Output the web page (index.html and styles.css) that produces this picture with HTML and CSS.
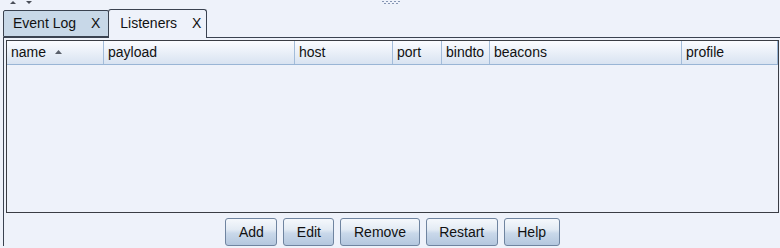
FILE: index.html
```html
<!DOCTYPE html>
<html lang="en">
<head>
    <meta charset="UTF-8">
    <title>Listeners</title>
    <link rel="stylesheet" href="styles.css">
</head>
<body>

    <!-- Split pane handle -->
    <div class="topbar">
        <div class="arrows">
            <svg width="24" height="6" viewBox="0 0 24 6">
                <polygon points="2,4 8,4 5,1" fill="#4a4f58"/>
                <polygon points="18,1 24,1 21,4" fill="#4a4f58"/>
            </svg>
        </div>
        <div class="grip">
            <svg width="20" height="6" viewBox="0 0 20 6">
                <g fill="#8797b4">
                    <rect x="0" y="1" width="2" height="1"/>
                    <rect x="4" y="1" width="2" height="1"/>
                    <rect x="8" y="1" width="2" height="1"/>
                    <rect x="12" y="1" width="2" height="1"/>
                    <rect x="16" y="1" width="2" height="1"/>
                    <rect x="2" y="3" width="2" height="1"/>
                    <rect x="6" y="3" width="2" height="1"/>
                    <rect x="10" y="3" width="2" height="1"/>
                    <rect x="14" y="3" width="2" height="1"/>
                </g>
            </svg>
        </div>
        <div></div>
    </div>

    <!-- Tabs -->
    <div class="tabs">
        <div class="tab">Event Log <span class="close">X</span></div>
        <div class="tab active">Listeners <span class="close">X</span></div>
    </div>

    <div class="panel">
        <!-- Listener table -->
        <div class="table">
            <div class="thead">
                <div class="th">name <svg class="sort" width="7" height="4" viewBox="0 0 7 4"><polygon points="0,4 7,4 3.5,0" fill="#5a606b"/></svg></div>
                <div class="th">payload</div>
                <div class="th">host</div>
                <div class="th">port</div>
                <div class="th">bindto</div>
                <div class="th">beacons</div>
                <div class="th">profile</div>
            </div>
            <div class="tbody"></div>
        </div>

        <!-- Buttons -->
        <div class="buttons">
            <button class="btn">Add</button>
            <button class="btn">Edit</button>
            <button class="btn">Remove</button>
            <button class="btn">Restart</button>
            <button class="btn">Help</button>
        </div>
    </div>

</body>
</html>
```

FILE: styles.css
```css
/* General */
body {
    margin: 0;
    height: 248px;
    overflow: hidden;
    background-color: #eef2fa;
    font-family: 'Liberation Sans', Arial, sans-serif;
    font-size: 14px;
    color: #111;
}

/* Split pane handle */
.topbar {
    display: grid;
    grid-template-columns: 1fr auto 1fr;
    height: 9px;
}

.arrows {
    padding-left: 8px;
}

.arrows svg,
.grip svg {
    display: block;
}

.grip {
    margin-left: 4px;
}

/* Tabs */
.tabs {
    display: flex;
    align-items: flex-end;
    margin-left: 3px;
    height: 28px;
}

.tab {
    box-sizing: border-box;
    height: 27px;
    padding: 0 8px 0 9px;
    line-height: 25px;
    background-color: #c8d8e8;
    border: 1px solid #3a4250;
    border-radius: 2px 2px 0 0;
}

.tab .close {
    margin-left: 11px;
}

.tab.active {
    position: relative;
    height: 29px;
    margin-bottom: -1px;
    margin-left: -1px;
    padding: 0 5px 0 11px;
    line-height: 27px;
    background-color: #eef2fa;
    border-bottom: none;
    border-radius: 3px 3px 0 0;
}

/* Panel */
.panel {
    margin-left: 3px;
    width: 790px;
    border-top: 1px solid #3a4250;
    border-left: 1px solid #3a4250;
    padding: 2px 0 0 2px;
}

.table {
    box-sizing: border-box;
    width: 773px;
    height: 173px;
    border: 1px solid #3a3d44;
    background-color: #eef2fa;
}

.thead {
    display: grid;
    grid-template-columns: 96px 191px 98px 49px 48px 192px 96px;
    width: 771px;
    height: 24px;
    box-sizing: border-box;
    border-bottom: 1px solid #99b5d5;
    border-right: 1px solid #99b5d5;
    background: linear-gradient(#fbfcff, #d8e3f1);
}

.th {
    padding-left: 4px;
    line-height: 23px;
    border-left: 1px solid #a3bcd9;
    white-space: nowrap;
}

.th:first-child {
    border-left: none;
}

.sort {
    margin-left: 5px;
    vertical-align: 3px;
}

/* Buttons */
.buttons {
    display: flex;
    justify-content: center;
    gap: 6px;
    width: 773px;
    margin-top: 5px;
}

.btn {
    height: 28px;
    padding: 0 12.5px;
    font-family: 'Liberation Sans', Arial, sans-serif;
    font-size: 14px;
    color: #111;
    border: 1px solid #6f84a0;
    border-radius: 3px;
    background: linear-gradient(#f5f8fc 0%, #e3ebf4 40%, #c9d8ea 55%, #b4c7de 100%);
}
```
